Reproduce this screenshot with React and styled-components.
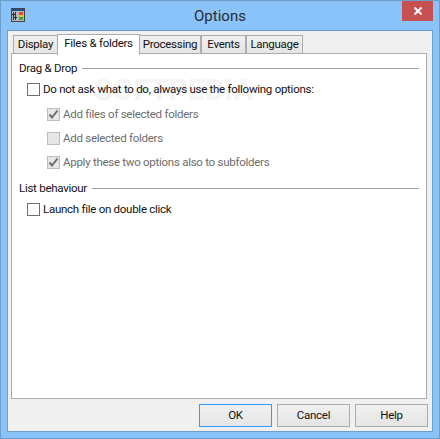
import React from 'react'
import styled, { createGlobalStyle } from 'styled-components'

const GlobalStyle = createGlobalStyle`
  html, body {
    margin: 0;
    padding: 0;
    background: #8ac3f9;
  }
`

const tabs = [
  { label: 'Display', width: 45 },
  { label: 'Files & folders', width: 83, active: true },
  { label: 'Processing', width: 62 },
  { label: 'Events', width: 45 },
  { label: 'Language', width: 57 },
]

const App = () => {
  return <Win>
    <GlobalStyle/>
    <TitleBar>
      <AppIcon viewBox='0 0 14 14' width='14' height='14'>
        <rect x='0.5' y='0.5' width='13' height='13' fill='#b8b8b8' stroke='#444'/>
        <rect x='1' y='1' width='12' height='2' fill='#1f4f8f'/>
        <rect x='2' y='4' width='1' height='8' fill='#333'/>
        <rect x='4' y='4' width='1' height='8' fill='#333'/>
        <rect x='1' y='6' width='3' height='1' fill='#222'/>
        <rect x='3' y='9' width='3' height='1' fill='#222'/>
        <rect x='8' y='4' width='4' height='3' fill='#e04a2a'/>
        <rect x='8' y='7' width='4' height='2' fill='#e8c820'/>
        <rect x='8' y='9' width='4' height='3' fill='#35a845'/>
      </AppIcon>
      <Title>Options</Title>
      <CloseButton>
        <svg viewBox='0 0 8 8' width='8' height='8'>
          <path d='M0.5 0.5 L7.5 7.5 M7.5 0.5 L0.5 7.5' stroke='#fff' strokeWidth='2'/>
        </svg>
      </CloseButton>
    </TitleBar>
    <Client>
      <TabRow>
        {tabs.map((t) => (
          <Tab key={t.label} $active={t.active} $width={t.width}>{t.label}</Tab>
        ))}
      </TabRow>
      <Pane>
        <Watermark>SOFTPEDIA</Watermark>
        <GroupHead>
          <span>Drag &amp; Drop</span>
          <Rule/>
        </GroupHead>
        <Option>
          <Box/>
          Do not ask what to do, always use the following options:
        </Option>
        <SubGroup>
          <SubOption>
            <Box $disabled>
              <Tick/>
            </Box>
            Add files of selected folders
          </SubOption>
          <SubOption>
            <Box $disabled/>
            Add selected folders
          </SubOption>
          <SubOption>
            <Box $disabled>
              <Tick/>
            </Box>
            Apply these two options also to subfolders
          </SubOption>
        </SubGroup>
        <GroupHead $second>
          <span>List behaviour</span>
          <Rule/>
        </GroupHead>
        <Option>
          <Box/>
          Launch file on double click
        </Option>
      </Pane>
      <Footer>
        <Btn $primary>OK</Btn>
        <Btn>Cancel</Btn>
        <Btn>Help</Btn>
      </Footer>
    </Client>
  </Win>
}

const Tick = () => (
  <svg viewBox='0 0 11 11' width='11' height='11'>
    <path d='M1.5 5.5 L4 8.5 L9.5 1.5' fill='none' stroke='#6d6d6d' strokeWidth='2'/>
  </svg>
)

const Win = styled.div`
  width: 440px;
  height: 439px;
  box-sizing: border-box;
  border: 1px solid #6f9dc9;
  background: #8ac3f9;
  display: flex;
  flex-direction: column;
  font-family: Roboto, "Noto Sans", sans-serif;
  font-size: 11.5px;
  letter-spacing: -0.27px;
  color: #111;
  overflow: hidden;
`

const TitleBar = styled.div`
  height: 29px;
  flex: none;
  display: flex;
  align-items: flex-start;
  position: relative;
  padding-left: 10px;
`

const AppIcon = styled.svg`
  margin-top: 7px;
  flex: none;
`

const Title = styled.div`
  position: absolute;
  left: 0;
  right: 0;
  top: 4px;
  text-align: center;
  font-size: 15px;
  letter-spacing: 0;
  line-height: 22px;
  color: #2b2b2b;
`

const CloseButton = styled.div`
  position: absolute;
  right: 6px;
  top: 0;
  width: 31px;
  height: 20px;
  background: #c75050;
  display: flex;
  align-items: center;
  justify-content: center;
`

const Client = styled.div`
  flex: 1;
  margin: 0 6px 6px 6px;
  border: 1px solid #6f9dc9;
  background: #f0f0f0;
  display: flex;
  flex-direction: column;
  padding: 2px 0 0 3px;
  min-height: 0;
`

const TabRow = styled.div`
  display: flex;
  align-items: flex-end;
  height: 21px;
  padding-left: 2px;
  position: relative;
  z-index: 1;
`

const Tab = styled.div`
  box-sizing: border-box;
  width: ${(p) => p.$width}px;
  height: ${(p) => (p.$active ? 21 : 19)}px;
  border: 1px solid #acacac;
  border-bottom: ${(p) => (p.$active ? 'none' : '1px solid #acacac')};
  margin-bottom: ${(p) => (p.$active ? '-1px' : '0')};
  background: ${(p) => (p.$active ? '#fff' : 'linear-gradient(#f0f0f0, #e5e5e5)')};
  text-align: center;
  line-height: 17px;
  white-space: nowrap;
  margin-left: ${(p) => (p.$active ? '-1px' : '0')};
  margin-right: ${(p) => (p.$active ? '-1px' : '0')};
`

const Pane = styled.div`
  height: 346px;
  flex: none;
  box-sizing: border-box;
  background: #fff;
  border: 1px solid #acacac;
  padding: 6px 7px 0 7px;
  margin: -1px 5px 0 0;
  position: relative;
  overflow: hidden;
`

const Watermark = styled.div`
  position: absolute;
  left: 82px;
  top: 18px;
  font-size: 30px;
  line-height: 36px;
  font-weight: 700;
  letter-spacing: 0;
  color: #f4f4f4;
`

const GroupHead = styled.div`
  display: flex;
  align-items: center;
  gap: 5px;
  height: 16px;
  margin-top: ${(p) => (p.$second ? '6px' : '0')};
  margin-bottom: 1px;
  position: relative;
`

const Rule = styled.div`
  flex: 1;
  height: 1px;
  background: #a0a0a0;
`

const Option = styled.label`
  display: flex;
  align-items: center;
  gap: 3px;
  height: 24px;
  margin-left: 8px;
  position: relative;
`

const SubGroup = styled.div`
  padding-top: 1px;
`

const SubOption = styled(Option)`
  margin-left: 28px;
  color: #6d6d6d;
`

const Box = styled.span`
  box-sizing: border-box;
  width: 13px;
  height: 13px;
  flex: none;
  border: 1px solid ${(p) => (p.$disabled ? '#bcbcbc' : '#707070')};
  background: ${(p) => (p.$disabled ? '#e6e6e6' : '#fff')};
  display: flex;
  align-items: center;
  justify-content: center;
`

const Footer = styled.div`
  display: flex;
  justify-content: flex-end;
  gap: 5px;
  padding: 5px 4px 0 0;
`

const Btn = styled.div`
  box-sizing: border-box;
  width: 73px;
  height: 23px;
  border: 1px solid ${(p) => (p.$primary ? '#3399ff' : '#acacac')};
  background: linear-gradient(#f0f0f0, #e5e5e5);
  text-align: center;
  line-height: 21px;
`

export default App
